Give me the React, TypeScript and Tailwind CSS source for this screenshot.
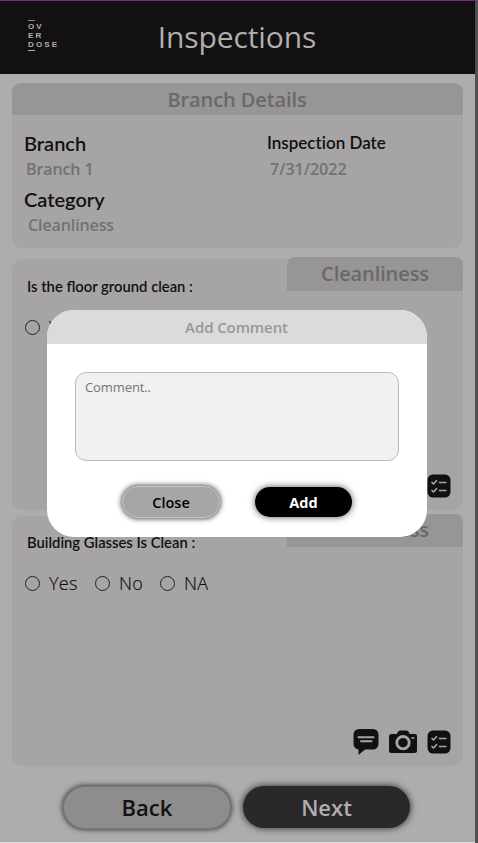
import type { ReactNode } from "react";

const LOGO = ["OV", "ER", "DOSE"];

function Logo() {
  return (
    <div className="flex w-10 flex-col items-start pt-[19px] font-['Liberation_Sans'] text-[8px] font-bold leading-[9px] tracking-[2.1px] text-[#b0aeaf]">
      <span className="h-px w-[7px] bg-[#8b898a]" />
      <div className="flex h-[29px] flex-col pt-[1px]">
        {LOGO.map((line) => (
          <span key={line} className="h-[9px]">{line}</span>
        ))}
      </div>
      <span className="h-px w-[7px] bg-[#b0aeaf]" />
    </div>
  );
}

function CommentIcon() {
  return (
    <svg width="26" height="28" viewBox="0 0 26 28" className="block">
      <path d="M6 1h14a5.500 5.500 0 0 1 5.500 5.500v9.500a5.500 5.500 0 0 1-5.500 5.500h-8L5.500 27v-5.500A5.500 5.500 0 0 1 .5 16V6.500A5.500 5.500 0 0 1 6 1Z" fill="#121011" />
      <path d="M5.500 9.300h15M8 13.300h10.500" stroke="#a6a4a5" strokeWidth="2" strokeLinecap="round" />
    </svg>
  );
}

function CameraIcon() {
  return (
    <svg width="28" height="24" viewBox="0 0 28 24" className="block">
      <path d="M2.500 4h5.300l1.400-2.500Q10 .5 11.200.5h6.200q1.200 0 2 1L20.800 4h5.200a2 2 0 0 1 2 2v14.500a2.500 2.500 0 0 1-2.500 2.500h-23A2.500 2.500 0 0 1 0 20.500v-14A2.500 2.500 0 0 1 2.500 4Z" fill="#121011" />
      <circle cx="14" cy="12.700" r="6.200" fill="none" stroke="#a6a4a5" strokeWidth="2.800" />
      <path d="M22.800 8h2" stroke="#a6a4a5" strokeWidth="1.500" strokeLinecap="round" />
    </svg>
  );
}

function ChecklistIcon() {
  return (
    <svg width="24" height="24" viewBox="0 0 24 24" className="block">
      <rect x=".5" y=".5" width="23" height="23" rx="5.500" fill="#121011" />
      <path d="M5 8.500 6.500 10l3-3.300M12.500 8.500h6.300M5 16.500 6.500 18l3-3.300M12.500 16.500h6.300" fill="none" stroke="#a6a4a5" strokeWidth="1.700" strokeLinecap="round" strokeLinejoin="round" />
    </svg>
  );
}

function Option({ label, className }: { label: string; className: string }) {
  return (
    <label className={`flex items-center ${className}`}>
      <span className="mt-px mr-[9px] size-[15px] shrink-0 rounded-full border border-[#222021]" />
      <span className="font-light tracking-[0.3px] [-webkit-text-stroke:0.2px_#121011]">{label}</span>
    </label>
  );
}

function Question({ children, compact = false }: { children: ReactNode; compact?: boolean }) {
  return (
    <section className={`flex w-[451px] flex-col rounded-[10px] bg-[#a6a4a5] ${compact ? "h-[250px]" : "h-[251px]"}`}>
      <div className={`-mt-[2px] flex shrink-0 ${compact ? "h-[33px]" : "h-[34px]"}`}>
        <h3 className={`w-[275px] shrink-0 pl-[15px] font-['Lato'] text-[14.8px] font-semibold leading-[24px] text-[#121011] ${compact ? "pt-[16px]" : "pt-[17px]"}`}>{children}</h3>
        <div className={`w-[176px] rounded-t-[8px] bg-[#979596] text-center text-xl font-semibold tracking-[-0.1px] text-[#6a6869] ${compact ? "leading-[31px]" : "leading-[33px]"}`}>Cleanliness</div>
      </div>
      <div className="mt-[22px] flex h-[28px] shrink-0 items-center pl-[13px] text-[18px] text-[#121011]">
        <Option label="Yes" className="w-[70px]" />
        <Option label="No" className="w-[65px]" />
        <Option label="NA" className="w-[80px]" />
      </div>
      <div className="mt-auto mb-[10px] flex h-[28px] items-center justify-end pr-[12px]">
        <CommentIcon />
        <span className="w-[10px]" />
        <CameraIcon />
        <span className="w-[10px]" />
        <ChecklistIcon />
      </div>
    </section>
  );
}

function AddComment() {
  return (
    <div className="absolute top-[310px] left-[47px] flex h-[227px] w-[380px] flex-col overflow-hidden rounded-[27px] bg-white">
      <h2 className="h-[34px] shrink-0 bg-[#dbdbdb] pr-[1px] text-center text-[15px] font-semibold leading-[35px] tracking-[-0.1px] text-[#979797]">Add Comment</h2>
      <textarea placeholder="Comment.." className="mt-[28px] ml-[28px] block h-[89px] w-[324px] shrink-0 resize-none rounded-[11px] border border-[#bababa] bg-[#f1f1f1] px-[9px] pt-[5px] text-[13px] leading-[19px] tracking-[-0.1px] text-[#757575] outline-none placeholder:text-[#757575]" />
      <div className="mt-[25px] flex items-center pl-[75px] text-[15px] font-semibold">
        <button className="h-[32px] w-[98px] rounded-full border border-[#c5c5c5] bg-[#a6a6a6] pt-px text-[14.500px] text-black shadow-[0_0_5px_1px_#555]">Close</button>
        <button className="ml-[35px] h-[30px] w-[97px] rounded-full bg-black pt-px text-[14.500px] font-bold text-white shadow-[0_0_7px_0px_#555]">Add</button>
      </div>
    </div>
  );
}

export default function App() {
  return (
    <div className="relative flex h-[843px] w-[478px] overflow-hidden bg-[#4d5150] font-['Open_Sans',sans-serif]">
      <main className="flex h-[843px] w-[475px] shrink-0 flex-col border-b border-[#dedede] bg-[#aeacad]">
        <header className="flex h-[74px] shrink-0 border-t border-[#7b2680] bg-[#121011] pl-[28px]">
          <Logo />
          <h1 className="w-[338px] text-center text-[30px] leading-[72px] tracking-[-0.1px] text-[#b0aeaf]">Inspections</h1>
        </header>
        <div className="flex flex-col pt-[9px] pl-[12px]">
          <section className="h-[165px] w-[451px] rounded-[10px] bg-[#a6a4a5]">
            <h2 className="h-[32px] rounded-t-[9px] bg-[#979596] pr-px text-center text-xl font-semibold leading-[34px] tracking-[-0.1px] text-[#6a6869]">Branch Details</h2>
            <div className="flex pt-[16px] pl-[12px]">
              <dl className="w-[243px]">
                <dt className="h-[24px] font-['Lato'] text-xl font-semibold leading-[25px] text-[#121011]">Branch</dt>
                <dd className="h-[32px] pl-[2px] text-[16px] font-semibold leading-[28px] tracking-[-0.1px] text-[#737172]">Branch 1</dd>
                <dt className="h-[24px] font-['Lato'] text-xl font-semibold leading-[25px] text-[#121011]">Category</dt>
                <dd className="pl-[4px] text-[16px] font-semibold leading-[28px] tracking-[-0.1px] text-[#737172]">Cleanliness</dd>
              </dl>
              <dl>
                <dt className="h-[24px] font-['Lato'] text-[17px] font-semibold leading-[24px] text-[#121011] [font-variant-ligatures:none]">Inspection Date</dt>
                <dd className="pl-[3px] text-[16px] font-semibold leading-[28px] text-[#737172]">7/31/2022</dd>
              </dl>
            </div>
          </section>
          <div className="flex flex-col gap-[6px] pt-[11px]">
            <Question>Is the floor ground clean :</Question>
            <Question compact>Building Glasses Is Clean :</Question>
          </div>
        </div>
        <div className="flex pt-[20px] pl-[63px] text-[22px] font-semibold">
          <button className="h-[43px] w-[168px] rounded-full border border-[#787677] bg-[#8e8c8d] text-[#121011] shadow-[0_0_5px_1px_#444]">Back</button>
          <button className="ml-[12px] h-[42px] w-[167px] rounded-full bg-[#2a2829] text-[#b0aeaf] shadow-[0_0_6px_1px_#444]">Next</button>
        </div>
      </main>
      <AddComment />
    </div>
  );
}
